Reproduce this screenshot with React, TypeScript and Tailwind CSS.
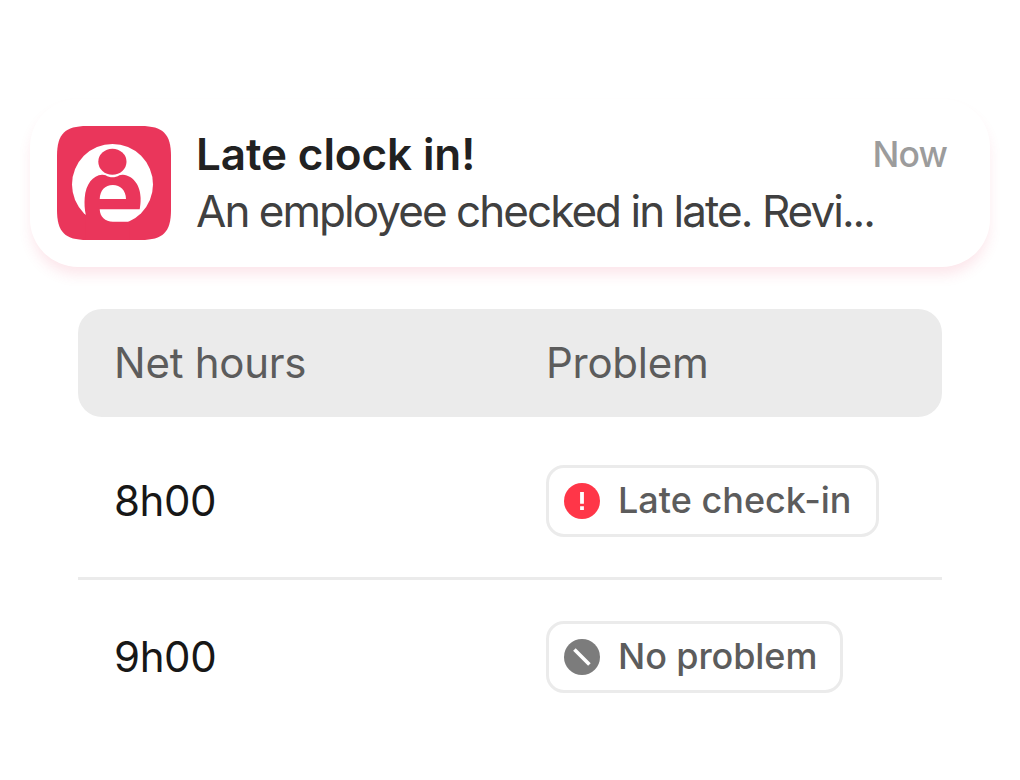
import type { ReactNode } from "react";

function AppLogo() {
  return (
    <svg viewBox="0 0 114 114" className="size-[114px] shrink-0" aria-hidden="true">
      <path
        fill="#ea365b"
        d="M30 0H84C106 0 114 8 114 30V84C114 106 106 114 84 114H30C8 114 0 106 0 84V30C0 8 8 0 30 0Z"
      />
      <circle cx="55.5" cy="58.5" r="40.5" fill="#fff" />
      <ellipse cx="55.4" cy="35.8" rx="14.1" ry="13" fill="#ea365b" />
      <path
        fill="#ea365b"
        d="M28.9 114V89.5C27.5 83 27.3 77 27.7 72C28.7 58 36 49.3 45 48.7Q47 48.6 48.6 49.2C53 52 58 52 62.4 49.2Q64 48.6 66 48.7C76.5 49.5 83.6 60 83.6 72C83.7 77 83.2 80 82.7 83.3H42.7C43 91 48 95.7 56 95.7H72.3V114Z"
      />
      <path fill="#fff" d="M42.7 73C42.9 64.5 48 59 55.8 59C63.5 59 68.8 64.5 69 73Z" />
    </svg>
  );
}

function AlertIcon() {
  return (
    <svg viewBox="0 0 36 36" className="size-9 shrink-0" aria-hidden="true">
      <circle cx="18" cy="18" r="18" fill="#ff3648" />
      <path d="M16.1 9h3.8v11.8h-3.8zM16.1 23.2h3.8v3.8h-3.8z" fill="#fff" />
    </svg>
  );
}

function ClearIcon() {
  return (
    <svg viewBox="0 0 36 36" className="size-9 shrink-0" aria-hidden="true">
      <circle cx="18" cy="18" r="18" fill="#7c7c7c" />
      <path d="M10.4 10.4L25.4 25.6" stroke="#fff" strokeWidth="3.6" />
    </svg>
  );
}

function Badge({
  icon,
  className,
  children,
}: {
  icon: ReactNode;
  className: string;
  children: ReactNode;
}) {
  return (
    <div
      className={`flex h-[72px] items-center gap-[18px] rounded-[18px] border-[3px] border-[#ebebeb] bg-white pl-[15px] ${className}`}
    >
      {icon}
      <span className="pb-[2px] text-[36px] leading-none font-medium whitespace-nowrap text-[#5c5c5c]">
        {children}
      </span>
    </div>
  );
}

function Row({ hours, children }: { hours: string; children: ReactNode }) {
  return (
    <div className="grid h-[156px] grid-cols-2 items-center">
      <span className="pl-9 text-[42px] leading-none tracking-[-0.4px] text-[#171717]">{hours}</span>
      <div className="pl-9">{children}</div>
    </div>
  );
}

export default function App() {
  return (
    <main className="flex h-[780px] w-[1020px] flex-col overflow-hidden bg-white pt-[99px] font-['Inter',sans-serif]">
      <section className="mx-[30px] flex h-[168px] shrink-0 items-center gap-[25px] rounded-[48px] bg-white pr-[43px] pl-[27px] shadow-[0_9px_14px_-2px_rgba(234,54,91,0.13)]">
        <AppLogo />
        <div className="min-w-0 flex-1">
          <div className="flex h-[56px] items-center justify-between">
            <h1 className="text-[44px] leading-none font-semibold tracking-[-0.1px] whitespace-nowrap text-[#212121]">
              Late clock in!
            </h1>
            <span className="pt-px text-[35.5px] leading-none font-medium tracking-[-0.9px] whitespace-nowrap text-[#9c9c9c]">
              Now
            </span>
          </div>
          <p className="flex h-[58px] items-center text-[44px] leading-none tracking-[-1.96px] whitespace-nowrap text-[#404040]">
            An employee checked in late. Revi...
          </p>
        </div>
      </section>

      <section className="mx-[78px] mt-[42px]">
        <header className="mb-[6px] grid h-[108px] grid-cols-2 items-center rounded-[24px] bg-[#ebebeb] text-[42px] leading-none tracking-[-0.25px] text-[#5c5c5c]">
          <span className="pl-9">Net hours</span>
          <span className="pl-9">Problem</span>
        </header>
        <Row hours="8h00">
          <Badge icon={<AlertIcon />} className="w-[333px]">
            Late check-in
          </Badge>
        </Row>
        <div className="-mt-[2px] -mb-px h-[3px] bg-[#ebebeb]" />
        <Row hours="9h00">
          <Badge icon={<ClearIcon />} className="w-[297px] tracking-[-0.1px]">
            No problem
          </Badge>
        </Row>
      </section>
    </main>
  );
}
